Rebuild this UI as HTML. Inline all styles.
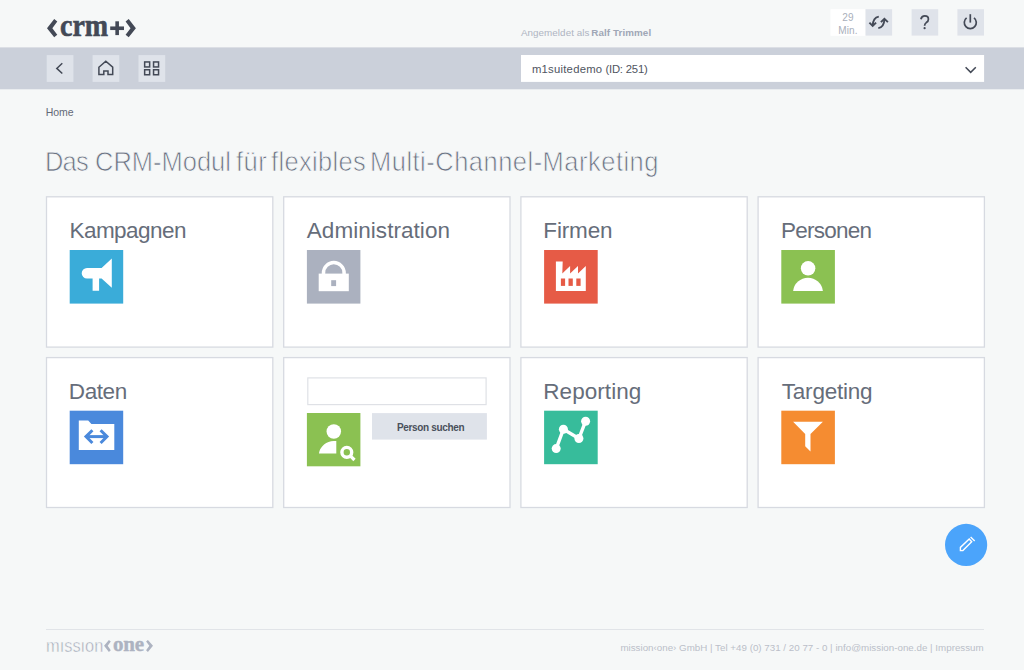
<!DOCTYPE html>
<html lang="de">
<head>
<meta charset="utf-8">
<title>crm+</title>
<style>
*{box-sizing:border-box;margin:0;padding:0}
html,body{width:1024px;height:670px;overflow:hidden}
body{background:#f6f8f8;font-family:"Liberation Sans",sans-serif;color:#4a505c;position:relative}
.abs{position:absolute}
#crm{left:59.6px;top:4.9px;-webkit-text-stroke:0.6px #434956;font-family:"Liberation Serif",serif;font-weight:bold;font-size:32.5px;line-height:40px;color:#434956;white-space:nowrap;transform-origin:0 0;transform:scaleX(0.862)}
.lg{font-size:9.8px;line-height:12px;color:#aeb4c2;white-space:nowrap}
.lg b{color:#a0a7b6}
.tm{font-size:10px;line-height:12px;color:#a9afbb;white-space:nowrap}
.selt{font-size:11.3px;line-height:15px;color:#4f5561;white-space:nowrap}
#crumb{font-size:10.5px;line-height:12px;color:#626977;white-space:nowrap}
.h1{font-size:27.4px;line-height:36px;color:#6b7383;white-space:nowrap;font-weight:normal;transform-origin:0 0;transform:scaleX(0.93);-webkit-text-stroke:0.75px #f6f8f8}
.t{font-size:22.5px;line-height:28px;color:#666d7a;white-space:nowrap}
#sbt{font-size:10px;line-height:12px;font-weight:bold;color:#4a505c;white-space:nowrap}
#fline{left:46px;top:629px;width:938px;height:1px;background:#e1e4e8}
#fm{left:45.5px;top:634px;font-size:19px;line-height:24px;color:#a2a8b7;-webkit-text-stroke:0.5px #f6f8f8;white-space:nowrap;transform-origin:0 0;transform:scaleX(0.862)}
#fo{left:113.2px;top:632px;font-family:"Liberation Serif",serif;font-weight:bold;font-size:22px;line-height:24px;color:#adb3c1;white-space:nowrap;letter-spacing:-0.2px;transform-origin:0 0;transform:scaleX(0.955);-webkit-text-stroke:0.4px #adb3c1}
#ftxt{font-size:9.75px;line-height:12px;color:#bbbfc9;white-space:nowrap}
#ov,#un{left:0;top:0;width:1024px;height:670px;pointer-events:none}
/*FIT*/
#t1{left:69.50px;top:217px;letter-spacing:-0.550px}
#t2{left:306.80px;top:217px;letter-spacing:0.049px}
#t3{left:543.30px;top:217px;letter-spacing:-0.160px}
#t4{left:781.00px;top:217px;letter-spacing:-0.744px}
#t5{left:68.80px;top:378px;letter-spacing:-0.400px}
#t6{left:543.30px;top:378px;letter-spacing:0.050px}
#t7{left:781.80px;top:378px;letter-spacing:-0.225px}
#h1a{left:45.40px;top:144px;letter-spacing:-0.900px}
#h1b{left:94.90px;top:144px;letter-spacing:0.000px}
#h1c{left:235.90px;top:144px;letter-spacing:0.500px}
#h1d{left:271.40px;top:144px;letter-spacing:0.350px}
#h1e{left:370.40px;top:144px;letter-spacing:0.536px}
#lg1{left:520.90px;top:27px;letter-spacing:0.078px}
#lg2{left:591.30px;top:27px;letter-spacing:0.091px}
#selt{left:531.90px;top:62px;letter-spacing:0.240px}
#crumb{left:45.70px;top:106px;letter-spacing:-0.000px}
#sbt{left:396.90px;top:422px;letter-spacing:-0.335px}
#ftxt{left:620.40px;top:642px;letter-spacing:0.013px}
#tm1{left:842.20px;top:12px;letter-spacing:0.200px}
#tm2{left:838.20px;top:25px;letter-spacing:0.133px}
#selu{left:605.40px;top:62px;letter-spacing:-0.200px}
/*ENDFIT*/
</style>
</head>
<body>
<svg id="un" class="abs" viewBox="0 0 1024 670" xmlns="http://www.w3.org/2000/svg">
<rect x="0" y="47.4" width="1024" height="41.9" fill="#cbd0da"/>
<rect x="521" y="55" width="463.1" height="26.9" fill="#fff"/>
<rect x="830.5" y="9.2" width="35.2" height="26.6" fill="#fff"/>
<g fill="#fff" stroke="#d7dae1" stroke-width="1.3">
<rect x="46.5" y="196.8" width="226.3" height="150.3"/>
<rect x="283.7" y="196.8" width="226.3" height="150.3"/>
<rect x="520.9" y="196.8" width="226.3" height="150.3"/>
<rect x="758.1" y="196.8" width="226.3" height="150.3"/>
<rect x="46.5" y="357.6" width="226.3" height="149.9"/>
<rect x="283.7" y="357.6" width="226.3" height="149.9"/>
<rect x="520.9" y="357.6" width="226.3" height="149.9"/>
<rect x="758.1" y="357.6" width="226.3" height="149.9"/>
</g>
<rect x="307.8" y="377.9" width="178.3" height="26.7" fill="#fff" stroke="#dfe1e6" stroke-width="1.2"/>
<rect x="372" y="413.1" width="114.9" height="26.5" fill="#dfe3ea"/>
</svg>
<div id="crm" class="abs">crm</div>
<div id="lg1" class="abs lg">Angemeldet als</div><div id="lg2" class="abs lg"><b>Ralf Trimmel</b></div>
<div id="tm1" class="abs tm">29</div><div id="tm2" class="abs tm">Min.</div>
<div id="selt" class="abs selt">m1suitedemo</div><div id="selu" class="abs selt">(ID: 251)</div>

<div id="crumb" class="abs">Home</div>
<div id="h1a" class="abs h1">Das</div><div id="h1b" class="abs h1">CRM-Modul</div><div id="h1c" class="abs h1">für</div><div id="h1d" class="abs h1">flexibles</div><div id="h1e" class="abs h1">Multi-Channel-Marketing</div>

<div class="abs t" id="t1">Kampagnen</div><div class="abs t" id="t2">Administration</div><div class="abs t" id="t3">Firmen</div><div class="abs t" id="t4">Personen</div><div class="abs t" id="t5">Daten</div><div class="abs t" id="t6">Reporting</div><div class="abs t" id="t7">Targeting</div>
<div id="sbt" class="abs">Person suchen</div>

<div id="fline" class="abs"></div>
<div id="fm" class="abs">mıssıon</div>
<div id="fo" class="abs">one</div>
<div id="ftxt" class="abs">mission‹one› GmbH | Tel +49 (0) 731 / 20 77 - 0 | info@mission-one.de | Impressum</div>

<svg id="ov" class="abs" viewBox="0 0 1024 670" xmlns="http://www.w3.org/2000/svg">
<!--OVERLAY-->
<!-- logo chevrons + plus -->
<g fill="#434956">
<polygon points="47,28.2 54.2,19 57.3,21.5 52.35,28.2 57.3,34.7 54.2,37.3"/>
<polygon points="135.9,28.2 128.7,19 125.6,21.5 130.55,28.2 125.6,34.7 128.7,37.3"/>
<rect x="110.2" y="26.45" width="13.8" height="3.6"/>
<rect x="115.35" y="21.3" width="3.6" height="13.8"/>
</g>
<!-- top right buttons -->
<g fill="#dfe3ea">
<rect x="865.5" y="9.2" width="26.6" height="26.4"/>
<rect x="911.6" y="9.2" width="26.6" height="26.4"/>
<rect x="957.4" y="9.2" width="26.6" height="26.4"/>
<rect x="46.7" y="55.1" width="26.7" height="26.8"/>
<rect x="92.6" y="55.1" width="26.7" height="26.8"/>
<rect x="138.5" y="55.1" width="26.7" height="26.8"/>
</g>
<g fill="none" stroke="#434956" stroke-width="1.85">
<!-- refresh -->
<path d="M878.8 16.6 Q873 17.6 872.7 25.6"/>
<path d="M869.4 22.6 L872.7 26 L876.1 22.6"/>
<path d="M878.3 28.2 Q884.1 27.2 884.4 19.2"/>
<path d="M880.9 22.2 L884.4 18.8 L887.9 22.2"/>
<!-- question -->
<path stroke-width="1.75" d="M920.9 19.3 Q921.6 15.9 924.8 15.9 Q928.4 15.9 928.4 19.2 Q928.4 21.2 926.3 22.6 Q924.6 23.8 924.6 25.8"/>
<!-- power -->
<path d="M970.3 14.2 V22.6" stroke-width="1.7"/>
<path d="M966.6 17.9 A6 6 0 1 0 974 17.9" stroke-width="1.7"/>
</g>
<circle cx="924.6" cy="28.2" r="1.1" fill="#434956"/>
<!-- nav icons -->
<g fill="none" stroke="#434956" stroke-width="1.5">
<path d="M62.3 63.3 L56.8 68.4 L62.3 73.5"/>
<path d="M98.9 67.2 L105.8 61.3 L112.7 67.2 V74.6 H108 V70.9 H103.8 V74.6 H98.9 Z" stroke-linejoin="miter"/>
<rect x="144.65" y="61.95" width="5" height="5"/>
<rect x="153.55" y="61.95" width="5" height="5"/>
<rect x="144.65" y="69.75" width="5" height="5"/>
<rect x="153.55" y="69.75" width="5" height="5"/>
<path d="M965.6 67.3 L970.7 72.4 L975.8 67.3"/>
</g>
<!-- card icons -->
<g transform="translate(69.7 250)"><rect width="53.5" height="53.6" fill="#3aacd9"/>
<path fill="#fff" d="M17.3 17.9 H31.9 L42.1 8.6 V37.8 L31.9 28.5 H29.4 V40.8 H22.9 V28.5 H17.3 A5.3 5.3 0 0 1 17.3 17.9 Z"/></g>
<g transform="translate(306.9 250)"><rect width="53.5" height="53.6" fill="#abb1bf"/>
<rect x="11.8" y="23.6" width="30.1" height="17.6" fill="#fff"/>
<path d="M16.6 24 V22.9 A10.3 10.3 0 0 1 37.2 22.9 V24" fill="none" stroke="#fff" stroke-width="3.5"/>
<rect x="24.3" y="30.2" width="4.9" height="5.9" fill="#abb1bf"/></g>
<g transform="translate(544.1 250)"><rect width="53.6" height="53.6" fill="#e65b46"/>
<path fill="#fff" d="M11.8 11.4 H18.6 L18.2 23.4 L26 16 V23.4 L33.9 16 V23.4 L41.7 16 V41 H11.8 Z"/>
<g fill="#e65b46"><rect x="16.8" y="28.5" width="4.2" height="7.4"/><rect x="24.4" y="28.5" width="4.3" height="7.4"/><rect x="32.2" y="28.5" width="4.3" height="7.4"/></g></g>
<g transform="translate(781.3 250)"><rect width="53.6" height="53.6" fill="#8bc152"/>
<circle cx="26.8" cy="18.3" r="7.26" fill="#fff"/>
<path fill="#fff" d="M11.8 41 A15 15 0 0 1 41.6 41 Z"/></g>
<g transform="translate(69.7 410.7)"><rect width="53.5" height="53.5" fill="#4a89dc"/>
<path fill="#fff" d="M9.1 9.7 H18.5 L21.7 13.2 H44.6 V39.3 H9.1 Z"/>
<g fill="none" stroke="#4a89dc" stroke-width="3"><path d="M16.3 25.9 H37.3"/><path d="M22.7 19.5 L16.3 25.9 L22.7 32.3"/><path d="M30.9 19.5 L37.3 25.9 L30.9 32.3"/></g></g>
<g transform="translate(306.9 413)"><rect width="53.5" height="53.3" fill="#8bc152"/>
<circle cx="26.9" cy="18.5" r="7.26" fill="#fff"/>
<path fill="#fff" d="M12 40.5 A15 15 0 0 1 26.9 28 H29.4 V40.5 Z"/>
<circle cx="39.9" cy="39.3" r="4.9" fill="none" stroke="#fff" stroke-width="3.4"/>
<path d="M43.2 42.6 L47.6 47" stroke="#fff" stroke-width="3.2" fill="none"/></g>
<g transform="translate(544.1 410.7)"><rect width="53.6" height="53.5" fill="#37bc9b"/>
<path d="M12.1 37.9 L19.3 18.5 L34.8 27.8 L41.5 10.5" fill="none" stroke="#fff" stroke-width="3.4"/>
<g fill="#fff"><circle cx="12.1" cy="37.9" r="4.5"/><circle cx="19.3" cy="18.5" r="4.5"/><circle cx="34.8" cy="27.8" r="4.5"/><circle cx="41.5" cy="10.5" r="4.5"/></g></g>
<g transform="translate(781.3 410.7)"><rect width="53.6" height="53.5" fill="#f58c31"/>
<path fill="#fff" d="M11.8 11.1 H41.6 L29.2 23.4 V40.7 L23.9 35.6 V23.4 Z"/></g>
<!-- fab -->
<circle cx="966.1" cy="544.9" r="21.1" fill="#4ba4fb"/>
<g fill="none" stroke="#fff" stroke-width="1.4" stroke-linejoin="miter">
<path d="M960.4 550.6 V547.4 L969.2 539 L971.7 541.7 L962.9 550.6 Z"/>
<path d="M970.6 536.9 L974.7 541"/>
</g>
<!-- footer chevrons -->
<g fill="#adb3c1">
<polygon points="104.05,645.8 108.9,640 110.8,641.6 107.7,645.8 110.8,650.3 108.9,652"/>
<polygon points="153,645.8 147.9,640 146.1,641.6 149.3,645.8 146.1,650.3 147.9,652"/>
</g>
<!--/OVERLAY-->
</svg>
</body>
</html>
